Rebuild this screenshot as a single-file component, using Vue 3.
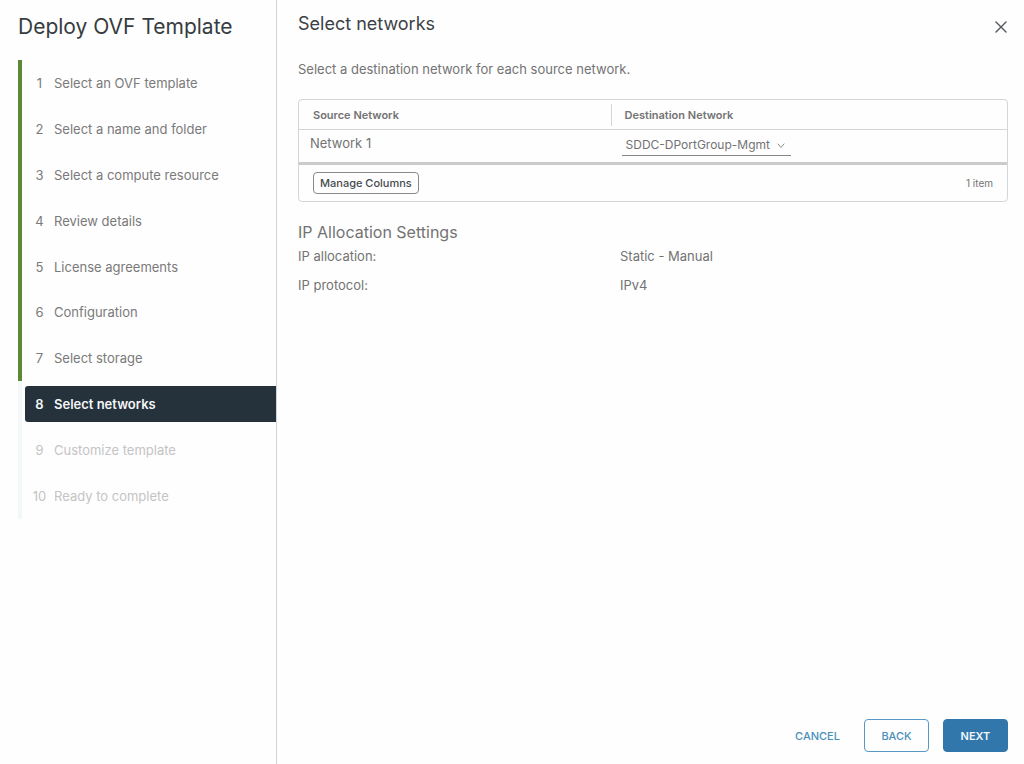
<script setup>
import { ref } from 'vue'

const steps = [
  'Select an OVF template',
  'Select a name and folder',
  'Select a compute resource',
  'Review details',
  'License agreements',
  'Configuration',
  'Select storage',
  'Select networks',
  'Customize template',
  'Ready to complete',
]
const current = 7
const destination = ref('SDDC-DPortGroup-Mgmt')

function stateOf(index) {
  if (index < current) return 'done'
  return index === current ? 'active' : 'pending'
}
</script>

<template>
  <div class="wizard">
    <aside class="sidebar">
      <h1 class="title">Deploy OVF Template</h1>
      <nav aria-label="Wizard steps">
        <ol class="steps">
          <li v-for="(step, i) in steps" :key="step" class="step" :class="stateOf(i)">
            <button
              type="button"
              class="step-link"
              :disabled="i > current"
              :aria-current="i === current ? 'step' : undefined"
            >
              <span class="num">{{ i + 1 }}</span>
              <span>{{ step }}</span>
            </button>
          </li>
        </ol>
      </nav>
    </aside>

    <main class="content">
      <header class="head">
        <h2 class="heading">Select networks</h2>
        <button type="button" class="close" aria-label="Close">
          <svg viewBox="0 0 12 12" width="12" height="12" aria-hidden="true">
            <path d="M1 1L11 11M11 1L1 11" fill="none" stroke="#50565a" stroke-width="1.4" stroke-linecap="round" />
          </svg>
        </button>
      </header>

      <p class="intro">Select a destination network for each source network.</p>

      <section class="datagrid">
        <table class="table">
          <thead>
            <tr>
              <th class="source" scope="col"><div class="th">Source Network</div></th>
              <th scope="col"><div class="th divided">Destination Network</div></th>
            </tr>
          </thead>
          <tbody>
            <tr>
              <td class="name">Network 1</td>
              <td class="dest">
                <span class="select-wrap">
                  <select v-model="destination" class="select" aria-label="Destination network for Network 1">
                    <option>SDDC-DPortGroup-Mgmt</option>
                  </select>
                  <svg class="caret" viewBox="0 0 8 6" width="8" height="6" aria-hidden="true">
                    <path d="M1 1L4 4.5L7 1" fill="none" stroke="#8a8a8a" stroke-width="1" stroke-linecap="round" />
                  </svg>
                </span>
              </td>
            </tr>
          </tbody>
        </table>
        <footer class="grid-foot">
          <button type="button" class="manage">Manage Columns</button>
          <span class="count">1 item</span>
        </footer>
      </section>

      <section class="ip">
        <h3 class="subheading">IP Allocation Settings</h3>
        <dl class="settings">
          <dt>IP allocation:</dt>
          <dd>Static - Manual</dd>
          <dt>IP protocol:</dt>
          <dd>IPv4</dd>
        </dl>
      </section>

      <footer class="actions">
        <button type="button" class="btn link">CANCEL</button>
        <button type="button" class="btn outline">BACK</button>
        <button type="button" class="btn primary">NEXT</button>
      </footer>
    </main>
  </div>
</template>

<style>
body {
  margin: 0;
  background: #fefefe;
}
</style>

<style scoped>
.wizard {
  display: flex;
  min-height: 100vh;
  font-family: Inter, "Open Sans", sans-serif;
  font-size: 13px;
  line-height: 20px;
  color: #737373;
}
button,
select {
  font-family: inherit;
  margin: 0;
}
h1,
h2,
h3,
p,
dl,
dd {
  margin: 0;
  font-weight: 400;
}
.sidebar {
  box-sizing: border-box;
  flex: 0 0 277px;
  padding: 12px 0 0 18px;
  border-right: 1px solid #d0d4d6;
}
.title {
  font-size: 21px;
  line-height: 30px;
  color: #363c40;
}
.steps {
  display: grid;
  grid-auto-rows: 1fr;
  min-height: 459px;
  margin: 18px 0 0;
  padding: 0;
  list-style: none;
}
.step {
  display: flex;
  align-items: center;
  padding-left: 3px;
  border-left: 4px solid #f3f8f8;
}
.step.done {
  border-left-color: #5a8a35;
}
.step-link {
  display: flex;
  align-items: center;
  gap: 7px;
  width: 100%;
  height: 36px;
  padding: 0 0 0 7px;
  border: 0;
  border-radius: 3px 0 0 3px;
  background: none;
  font-size: 13px;
  color: #7a7a7a;
  text-align: left;
}
.num {
  width: 15px;
  text-align: center;
}
.active .step-link {
  background: #25313b;
  color: #f4f6f7;
  font-weight: 600;
}
.pending .step-link {
  color: #c4c4c4;
}
.content {
  display: flex;
  flex: 1;
  flex-direction: column;
  min-width: 0;
  padding: 12px 16px 12px 21px;
}
.head {
  display: flex;
  align-items: center;
  justify-content: space-between;
}
.heading {
  font-size: 18px;
  line-height: 24px;
  color: #3c4145;
}
.close {
  display: flex;
  padding: 6px 1px 0 0;
  border: 0;
  background: none;
}
.intro {
  margin-top: 23px;
}
.datagrid {
  margin-top: 20px;
  border: 1px solid #d3d6d7;
  border-radius: 4px;
}
.table {
  width: 100%;
  border-collapse: collapse;
  table-layout: fixed;
}
.table th {
  height: 29px;
  padding: 0;
  border-bottom: 1px solid #d3d6d7;
  font-size: 11px;
  font-weight: 600;
  line-height: 22px;
  text-align: left;
}
.table .source {
  width: 44%;
}
.th {
  padding-left: 14px;
}
.divided {
  padding-left: 13px;
  border-left: 1px solid #d3d6d7;
}
.table td {
  box-sizing: border-box;
  height: 32px;
  padding: 0;
  vertical-align: top;
}
.table .name {
  padding: 3px 0 0 11px;
}
.table .dest {
  padding: 5px 0 0 11px;
}
.select-wrap {
  display: inline-flex;
  position: relative;
  vertical-align: top;
}
.select {
  width: 169px;
  height: 21px;
  padding: 0 20px 2px 4px;
  border: 0;
  border-bottom: 1px solid #858585;
  border-radius: 0;
  appearance: none;
  background: none;
  font-size: 12px;
  color: #737373;
}
.caret {
  position: absolute;
  right: 6px;
  top: 8px;
  pointer-events: none;
}
.grid-foot {
  display: flex;
  align-items: center;
  justify-content: space-between;
  height: 36px;
  padding: 0 14px;
  border-top: 3px solid #cbcbcb;
}
.manage {
  height: 22px;
  padding: 0 6px;
  border: 1px solid #858b8e;
  border-radius: 4px;
  background: none;
  font-size: 11px;
  font-weight: 500;
  color: #464b4e;
}
.count {
  font-size: 10px;
}
.ip {
  margin-top: 19px;
}
.subheading {
  font-size: 16px;
  line-height: 22px;
}
.settings {
  display: grid;
  grid-template-columns: 322px 1fr;
  row-gap: 9px;
  margin-top: 3px;
}
.actions {
  display: flex;
  justify-content: flex-end;
  gap: 14px;
  margin-top: auto;
}
.btn {
  height: 33px;
  min-width: 65px;
  padding: 0 8px;
  border: 1px solid transparent;
  border-radius: 4px;
  background: none;
  font-size: 11px;
  font-weight: 500;
  color: #4a8fbc;
}
.outline {
  border-color: #5798c4;
}
.primary {
  background: #3277ab;
  border-color: #3277ab;
  color: #f0f6fa;
  font-weight: 600;
}
</style>
